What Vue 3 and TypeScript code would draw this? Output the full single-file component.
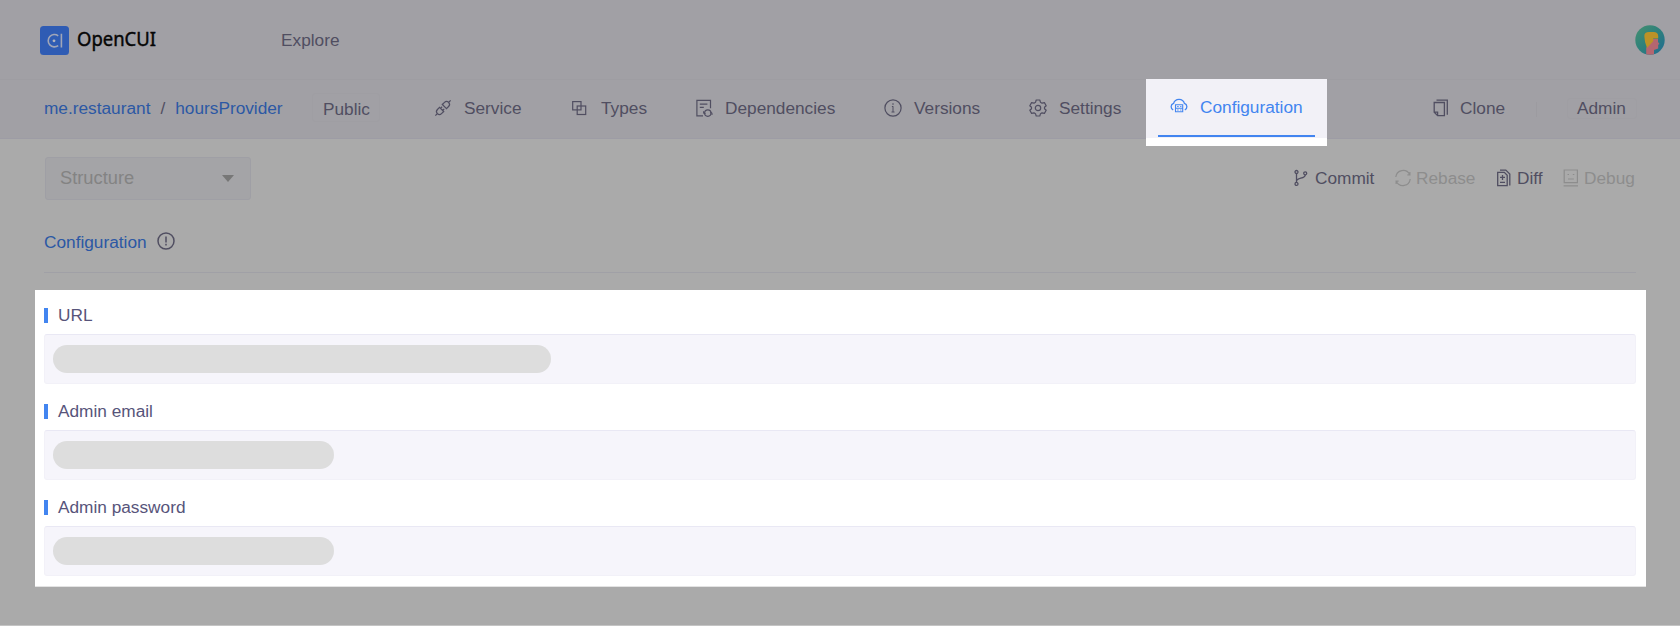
<script setup lang="ts">
interface NavItem { id: string; label: string }
interface Field { label: string; long: boolean }

const nav: NavItem[] = [
  { id: 'service', label: 'Service' },
  { id: 'types', label: 'Types' },
  { id: 'deps', label: 'Dependencies' },
  { id: 'versions', label: 'Versions' },
  { id: 'settings', label: 'Settings' },
]
const fields: Field[] = [
  { label: 'URL', long: true },
  { label: 'Admin email', long: false },
  { label: 'Admin password', long: false },
]
</script>

<template>
  <div class="page">
    <header class="header">
      <div class="top">
        <svg class="logo" width="29" height="29" viewBox="0 0 29 29">
          <rect width="29" height="29" rx="3.5" fill="#2f5cb4" />
          <g fill="none" stroke="#a0a6b8" stroke-width="1.6">
            <path d="M18.2 9.8A6.2 6.2 0 1 0 18.2 19.6M21.4 7.8V21.5" />
          </g>
          <circle cx="14" cy="14.8" r="1.4" fill="#b5b7be" />
        </svg>
        <svg class="brand" width="86" height="34" viewBox="0 0 86 34">
          <text x="0" y="23.2" textLength="79" lengthAdjust="spacingAndGlyphs">OpenCUI</text>
        </svg>
        <a class="explore">Explore</a>
        <svg class="avatar" width="30" height="30" viewBox="0 0 30 30">
          <defs>
            <linearGradient id="sky" x1="0" y1="0" x2="1" y2="1">
              <stop offset="0" stop-color="#45906f" /><stop offset=".5" stop-color="#2e807c" /><stop offset="1" stop-color="#1f6a94" />
            </linearGradient>
            <clipPath id="disc"><circle cx="15" cy="15" r="14.7" /></clipPath>
          </defs>
          <g clip-path="url(#disc)">
            <rect width="30" height="30" fill="url(#sky)" />
            <path d="M16 14h7v3l1.5 2-1.3.8v3.6L19 25v5h-7.8v-7z" fill="#b46670" />
            <path d="M9.3 11Q9.3 7 14 7h4.5Q23 7 23.2 11v2.5h-5v2.7L12 23Q9.3 16 9.3 11z" fill="#bb9227" />
          </g>
        </svg>
      </div>
      <div class="bar">
        <div class="crumb"><a>me.restaurant</a><span class="slash">/</span><a>hoursProvider</a></div>
        <div class="public">Public</div>
        <nav class="nav">
          <a v-for="item in nav" :key="item.id" class="item">
            <svg width="18" height="18" viewBox="0 0 18 18" fill="none" stroke="currentColor" stroke-width="1.2">
              <g v-if="item.id === 'service'" transform="translate(9 9) rotate(-45)">
                <path d="M-10.8 0h2.6M8.2 0h2.6M-2 -3.6v7.2M2 -3.6v7.2M-2 -2.9h-3a2.9 2.9 0 0 0 0 5.8h3M2 -2.9h3a2.9 2.9 0 0 1 0 5.8h-3M-2 -1.5h2.2M-2 1.5h2.2" />
              </g>
              <g v-else-if="item.id === 'types'">
                <rect x="1.7" y="2.6" width="8.3" height="8.3" /><rect x="6.2" y="7" width="8.5" height="8.5" />
              </g>
              <g v-else-if="item.id === 'deps'">
                <path d="M8 16.9H1.9V1.3h13.6v8M4.8 5.2h7.6M4.8 8.3h4" />
                <circle cx="12.8" cy="14.1" r="3.2" /><path d="M8.6 12.2v2.2h2M17 16v-2.2h-2" stroke-width="1" />
              </g>
              <g v-else-if="item.id === 'versions'">
                <circle cx="9" cy="9" r="8.1" /><path d="M9 7.2v5.8M7.9 7.5H9M7.5 13h3" stroke-width="1" /><circle cx="9" cy="5" r=".5" fill="currentColor" stroke-width=".5" />
              </g>
              <g v-else stroke-linejoin="round">
                <path d="M7.2 1h3.6l.7 2.3 1.5.9 2.4-.6 1.8 3.1-1.7 1.6v1.4l1.7 1.6-1.8 3.1-2.4-.6-1.5.9-.7 2.3H7.2l-.7-2.3-1.5-.9-2.4.6-1.8-3.1 1.7-1.6V8.3L.8 6.7l1.8-3.1 2.4.6 1.5-.9z" />
                <circle cx="9" cy="9" r="2.7" />
              </g>
            </svg>
            <span>{{ item.label }}</span>
          </a>
        </nav>
        <a class="tab">
          <span class="tab-body">
            <svg width="18" height="16" viewBox="0 0 18 16" fill="none" stroke="currentColor" stroke-width="1.3">
              <path d="M3.2 11.8A3.4 3.4 0 0 1 3.6 5.4 5.6 5.6 0 0 1 14.4 5.4a3.4 3.4 0 0 1 .4 6.4" />
              <path d="M5.5 6.7h7.2v7H5.5zM5.5 10.2h7.2M7.2 8.5h1.4M7.2 12h1.4M10.2 8.5h1.2M10.2 12h1.2" stroke-width="1.1" />
            </svg>
            <span>Configuration</span>
          </span>
        </a>
        <a class="item clone">
          <svg width="18" height="18" viewBox="0 0 18 18" fill="none" stroke="currentColor" stroke-width="1.3">
            <path d="M3.5 1.2h10.8v14.5M1.2 3.5h10.2v13.1H4.6l-3.4-3.4zM1.2 13.2h3.4v3.4" />
          </svg>
          <span>Clone</span>
        </a>
        <i class="sep"></i>
        <div class="admin">Admin</div>
      </div>
    </header>

    <main>
      <div class="tools">
        <div class="select"><span>Structure</span><i></i></div>
        <div class="actions">
          <a class="commit">
            <svg width="14" height="18" viewBox="0 0 14 18" fill="none" stroke="currentColor" stroke-width="1.3">
              <circle cx="2.5" cy="3" r="1.5" /><circle cx="2.5" cy="14.9" r="1.5" /><circle cx="11.2" cy="4.3" r="1.5" /><path d="M2.5 4.6v8.7M11.2 5.9c0 4-8.7 2.6-8.7 6.4" />
            </svg><span>Commit</span>
          </a>
          <a class="rebase off">
            <svg width="18" height="18" viewBox="0 0 18 18" fill="none" stroke="currentColor" stroke-width="1.2">
              <path d="M1.8 8A7.3 7.3 0 0 1 15.6 5.5M16.2 10A7.3 7.3 0 0 1 2.4 12.5M15.9 3v2.8h-2.5M2.1 15v-2.8h2.5" />
            </svg><span>Rebase</span>
          </a>
          <a class="diff">
            <svg width="16" height="18" viewBox="0 0 16 18" fill="none" stroke="currentColor" stroke-width="1.3">
              <path d="M1.7 3.3h6.6l2.9 2.9v10.5H1.7zM4 1.1h5.8L13.8 5v11.5M6.5 5.9v5M4 8.4h5M4 13.3h5" />
            </svg><span>Diff</span>
          </a>
          <a class="debug off">
            <svg width="16" height="18" viewBox="0 0 16 18" fill="none" stroke="currentColor" stroke-width="1.2">
              <path d="M1.2 1h13.2v12.6H1.2zM.6 16.8h14.4M4.5 5.5H6M9.8 5.5h1.5M5 10h5.8" />
            </svg><span>Debug</span>
          </a>
        </div>
      </div>
      <div class="section">
        <span>Configuration</span>
        <svg width="18" height="18" viewBox="0 0 18 18" fill="none" stroke="currentColor" stroke-width="1.5">
          <circle cx="9" cy="9" r="8" /><path d="M9 4.4v6M9 11.8v1.6" />
        </svg>
      </div>
      <section class="panel">
        <div v-for="f in fields" :key="f.label" class="field">
          <label>{{ f.label }}</label>
          <div class="input"><i class="mask" :class="{ long: f.long }"></i></div>
        </div>
      </section>
    </main>
  </div>
</template>

<style>
body { margin: 0; background: #aaa; }
</style>

<style scoped>
* { box-sizing: border-box; }
.page { height: 626px; overflow: hidden; background: #aaa; border-bottom: 1px solid #c4c4c4; color: #504e61; font: 17.25px/22px "Liberation Sans", Arial, sans-serif; white-space: nowrap; }
svg { display: block; flex: none; }
.header { height: 139px; background: #a1a0a5; border-bottom: 1px solid #9d9ca5; }
.top { height: 80px; display: flex; align-items: center; padding: 1px 15px 0 40px; border-bottom: 1px solid #9e9da2; }
.brand { margin: 0 0 0 8px; overflow: visible; }
.brand text { font: 400 20.8px "Noto Sans", sans-serif; fill: #060606; stroke: #060606; stroke-width: .45; }
.explore { margin-left: 118px; }
.avatar { margin-left: auto; }
.bar { height: 58px; display: flex; align-items: flex-start; padding-left: 44px; }
.crumb { width: 268px; padding-top: 17px; color: #2c58a4; }
.slash { color: #504e61; margin: 0 10px; }
.public { width: 68px; height: 29px; margin-top: 13px; padding: 4px 0 0 10px; border: 1px solid #9f9ea3; border-radius: 3px; }
.nav { width: 712px; margin: 17px 0 0 54px; display: grid; grid-template-columns: 137px 124px 189px 145px 117px; }
.item { display: flex; align-items: center; gap: 12px; }
.item svg { margin-top: -1px; }
.tab { position: relative; z-index: 1; width: 181px; height: 67px; margin-top: -1px; padding: 0 12px; background: linear-gradient(#f2f1f7 59px, #fff 59px); color: #4285f0; }
.tab-body { display: flex; align-items: center; gap: 12px; height: 58px; padding: 0 0 0 12px; border-bottom: 2px solid #4285f0; }
.tab-body svg { margin-top: -2px; }
.clone { width: 103px; margin: 17px 0 0 106px; gap: 9px; }
.sep { height: 15px; width: 1px; margin-top: 22px; background: #9c9ba0; }
.admin { width: 70px; height: 21px; margin: 18px 0 0 30px; padding-left: 9px; border: 1px solid #9f9ea3; border-radius: 3px; line-height: 19px; }
.tools { height: 61px; padding: 18px 44px 0 45px; display: flex; justify-content: space-between; }
.select { width: 206px; height: 43px; padding: 0 16px 2px 14px; display: flex; align-items: center; justify-content: space-between; background: #a4a4a7; border: 1px solid #9f9fa5; border-radius: 3px; color: #838383; font-size: 18.3px; }
.select i { border: 6px solid transparent; border-top: 7px solid #777; border-bottom: 0; margin-top: 2px; }
.actions { display: flex; height: 41px; align-items: center; }
.actions a { display: flex; align-items: center; }
.commit { gap: 7px; width: 100px; }
.rebase { gap: 4px; width: 102px; }
.diff { gap: 5px; width: 67px; }
.debug { gap: 5px; width: 73px; }
.off { color: #8d8d8d; }
.section { height: 73px; margin: 0 44px; padding-top: 31px; display: flex; align-items: flex-start; gap: 10px; border-bottom: 1px solid #a0a0a6; }
.section span { color: #2c58a4; }
.section svg { margin-top: 1px; }
.panel { width: 1611px; height: 297px; margin: 17px 0 0 35px; padding: 14px 10px 0 9px; background: #fff; color: #57547a; border-bottom: 1px solid #e3e3e3; }
.field { height: 96px; }
label { display: flex; align-items: center; height: 22px; margin-bottom: 8px; }
label::before { content: ""; width: 4px; height: 15px; margin: 1px 10px 0 0; background: #4285f0; }
.input { height: 50px; padding: 10px 8px; background: #f6f5fb; border: 1px solid #f2f1f8; border-top-color: #e9e8f4; border-radius: 3px; }
.mask { display: block; width: 281px; height: 28px; border-radius: 14px; background: #ddd; }
.mask.long { width: 498px; }
</style>
